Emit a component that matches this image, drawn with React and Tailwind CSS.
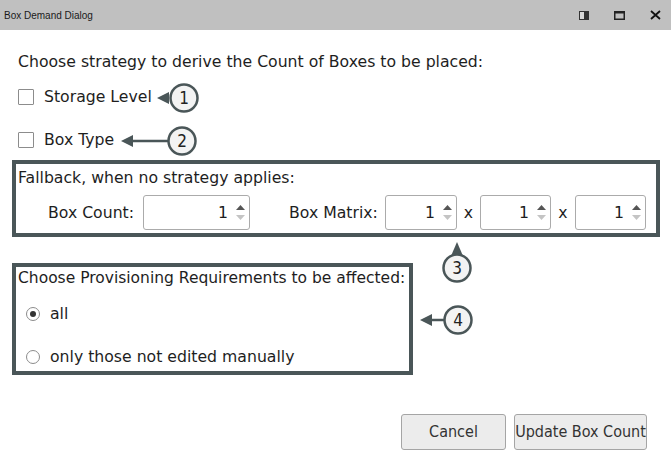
import React from "react";

const font = { fontFamily: '"DejaVu Sans", sans-serif' };

const Checkbox = ({ label }) => (
  <div className="flex items-center h-[20px]">
    <span className="w-[16px] h-[16px] border border-[#8c8c8c] bg-white rounded-[1px]"></span>
    <span className="ml-[10px] text-[15.7px] text-[#1e1e1e]">{label}</span>
  </div>
);

const Radio = ({ label, checked }) => (
  <div className="flex items-center h-[20px] ml-[10px]">
    <span className="w-[14px] h-[14px] rounded-full border border-[#8c8c8c] bg-white flex items-center justify-center">
      {checked && <span className="w-[6px] h-[6px] rounded-full bg-[#333]"></span>}
    </span>
    <span className="ml-[10px] text-[15.7px] text-[#1e1e1e]">{label}</span>
  </div>
);

const Spinner = ({ width }) => (
  <div
    className="h-[35px] border border-[#ababab] rounded-[3px] bg-white flex items-center justify-end pr-[4px]"
    style={{ width }}
  >
    <span className="text-[15.7px] text-[#1e1e1e] mr-[8px]">1</span>
    <span className="flex flex-col items-center gap-[5px]">
      <svg width="9" height="5" viewBox="0 0 9 5">
        <path d="M0 5 L4.5 0 L9 5 Z" fill="#555" />
      </svg>
      <svg width="9" height="5" viewBox="0 0 9 5">
        <path d="M0 0 L4.5 5 L9 0 Z" fill="#c4c4c4" />
      </svg>
    </span>
  </div>
);

const Callouts = () => (
  <svg className="absolute left-0 top-0 pointer-events-none" width="671" height="456">
    <g stroke="#4a5658" strokeWidth="2.5" fill="#f3f3f3">
      {/* 1 */}
      <path d="M157 98 L169 92 L169 104 Z" fill="#4a5658" stroke="none" />
      <circle cx="184" cy="98" r="13.5" />
      {/* 2 */}
      <line x1="128" y1="141" x2="168" y2="141" />
      <path d="M121 141 L133 135 L133 147 Z" fill="#4a5658" stroke="none" />
      <circle cx="182" cy="141" r="13.5" />
      {/* 3 */}
      <path d="M457 242 L451 256 L463 256 Z" fill="#4a5658" stroke="none" />
      <circle cx="457" cy="268" r="13.5" />
      {/* 4 */}
      <line x1="428" y1="320" x2="444" y2="320" />
      <path d="M420 320 L432 314 L432 326 Z" fill="#4a5658" stroke="none" />
      <circle cx="458" cy="320" r="13.5" />
    </g>
    <g fill="#222" fontSize="17" textAnchor="middle" style={{ fontFamily: '"DejaVu Sans Condensed", "DejaVu Sans", sans-serif' }}>
      <text x="184" y="104">1</text>
      <text x="182" y="147">2</text>
      <text x="457" y="274">3</text>
      <text x="458" y="326">4</text>
    </g>
  </svg>
);

export default function App() {
  return (
    <div className="relative w-[671px] h-[456px] bg-white overflow-hidden" style={font}>
      <div className="h-[30px] bg-[#c0c0c0] flex items-center justify-between pl-[4px] pr-[10px]">
        <span className="text-[10px] text-[#1a1a1a] font-['Liberation_Sans',sans-serif]">Box Demand Dialog</span>
        <div className="flex items-center gap-[25px]">
          <svg width="10" height="9" viewBox="0 0 10 9">
            <rect x="0.5" y="0.5" width="9" height="8" fill="#d8d8d8" stroke="#333" />
            <rect x="5" y="1" width="4" height="7" fill="#333" />
          </svg>
          <svg width="11" height="9" viewBox="0 0 11 9">
            <rect x="0.75" y="0.75" width="9.5" height="7.5" fill="none" stroke="#222" strokeWidth="1.5" />
            <rect x="0" y="0" width="11" height="2.5" fill="#222" />
          </svg>
          <svg width="11" height="10" viewBox="0 0 11 10">
            <path d="M1 1 L10 9 M10 1 L1 9" stroke="#111" strokeWidth="1.8" />
          </svg>
        </div>
      </div>

      <div className="pl-[18px]">
        <div className="mt-[22px] h-[20px] flex items-center text-[15.7px] text-[#1e1e1e]">
          Choose strategy to derive the Count of Boxes to be placed:
        </div>
        <div className="mt-[15px]">
          <Checkbox label="Storage Level" />
        </div>
        <div className="mt-[23px]">
          <Checkbox label="Box Type" />
        </div>
      </div>

      <div className="mt-[10px] ml-[12px] w-[648px] border-[4px] border-[#4a5658]">
        <div className="pt-[4px] pl-[2px] h-[24px] flex items-center text-[15.7px] text-[#1e1e1e]">
          Fallback, when no strategy applies:
        </div>
        <div className="mt-[7px] mb-[3px] flex items-center text-[15.7px] text-[#1e1e1e]">
          <span className="ml-[32px] w-[95px]">Box Count:</span>
          <Spinner width={107} />
          <span className="ml-[39px] w-[96px]">Box Matrix:</span>
          <Spinner width={72} />
          <span className="w-[23px] text-center">x</span>
          <Spinner width={71} />
          <span className="w-[24px] text-center">x</span>
          <Spinner width={71} />
        </div>
      </div>

      <div className="mt-[26px] ml-[12px] w-[401px] border-[4px] border-[#4a5658] pb-[4px]">
        <div className="pt-[2px] pl-[2px] h-[22px] flex items-center text-[15.5px] text-[#1e1e1e] whitespace-nowrap">
          Choose Provisioning Requirements to be affected:
        </div>
        <div className="mt-[15px]">
          <Radio label="all" checked />
        </div>
        <div className="mt-[23px]">
          <Radio label="only those not edited manually" />
        </div>
      </div>

      <div className="mt-[39px] flex justify-end gap-[8px] pr-[24px] font-['DejaVu_Sans_Condensed',sans-serif]">
        <button className="w-[105px] h-[36px] rounded-[3px] border border-[#a5a5a5] bg-[#ececec] text-[16px] text-[#333]">
          Cancel
        </button>
        <button className="w-[133px] h-[36px] rounded-[3px] border border-[#a5a5a5] bg-[#ececec] text-[16px] text-[#333] whitespace-nowrap px-0">
          Update Box Count
        </button>
      </div>

      <Callouts />
    </div>
  );
}
